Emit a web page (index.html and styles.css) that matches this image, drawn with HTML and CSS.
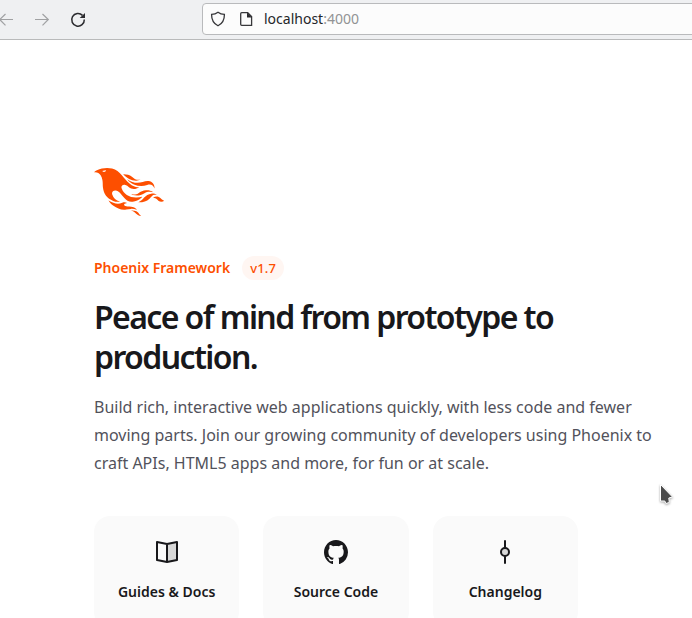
FILE: index.html
```
<!DOCTYPE html>
<html lang="en">
<head>
<meta charset="utf-8">
<title>Phoenix Framework</title>
<link rel="stylesheet" href="styles.css">
</head>
<body>
<header class="toolbar">
  <nav class="nav">
    <svg class="nav-icon muted" viewBox="0 0 16 16"><path d="M15 7.500H1.5M7.500 2 1.700 7.500l5.800 5.800"/></svg>
    <svg class="nav-icon muted" viewBox="0 0 16 16"><path d="M1 7.500h13.500M8.500 2l5.800 5.500-5.800 5.800"/></svg>
    <svg class="nav-icon reload" viewBox="0 0 16 16"><path d="M14.300 7.500A6.300 6.300 0 1 1 12.500 3.400"/><path class="solid" d="M15 1v5h-5.300z"/></svg>
  </nav>
  <div class="address">
    <svg class="address-icon" viewBox="0 0 16 16"><path d="M8 1.2c2 1.500 4 2.100 6.400 2.200.1 5-1.500 8.800-6.400 11.400C3.100 12.200 1.500 8.400 1.600 3.400 4 3.300 6 2.700 8 1.200Z"/></svg>
    <svg class="address-icon" viewBox="0 0 16 16"><path d="M3.700 1.700h6l3.900 3.900v8.700H3.700c-.6 0-1-.4-1-1V2.700c0-.6.4-1 1-1Z"/><path class="solid" d="M9 1.400v5h5z"/></svg>
    <span class="url">localhost<span class="port">:4000</span></span>
  </div>
</header>
<main class="page">
  <svg class="logo" viewBox="0 0 71 48" aria-hidden="true"><path d="m26.371 33.477-.552-.1c-3.92-.729-6.397-3.1-7.57-6.829-.733-2.324.597-4.035 3.035-4.148 1.995-.092 3.362 1.055 4.57 2.39 1.557 1.72 2.984 3.558 4.514 5.305 2.202 2.515 4.797 4.134 8.347 3.634 3.183-.448 5.958-1.725 8.371-3.828.363-.316.761-.592 1.144-.886l-.241-.284c-2.027.63-4.093.841-6.205.735-3.195-.16-6.24-.828-8.964-2.582-2.486-1.601-4.319-3.746-5.19-6.611-.704-2.315.736-3.934 3.135-3.6.948.133 1.746.56 2.463 1.165.583.493 1.143 1.015 1.738 1.493 2.8 2.25 6.712 2.375 10.265-.068-5.842-.026-9.817-3.24-13.308-7.313-1.366-1.594-2.7-3.216-4.095-4.785-2.698-3.036-5.692-5.71-9.79-6.623C12.8-.623 7.745.14 2.893 2.361 1.926 2.804.997 3.319 0 4.149c.494 0 .763.006 1.032 0 2.446-.064 4.28 1.023 5.602 3.024.962 1.457 1.415 3.104 1.761 4.798.513 2.515.247 5.078.544 7.605.761 6.494 4.08 11.026 10.26 13.346 2.267.852 4.591 1.135 7.172.555ZM10.751 3.852c-.976.246-1.756-.148-2.56-.962 1.377-.343 2.592-.476 3.897-.528-.107.848-.607 1.306-1.336 1.49Zm32.002 37.924c-.085-.626-.62-.901-1.04-1.228-1.857-1.446-4.03-1.958-6.333-2-1.375-.026-2.735-.128-4.031-.61-.595-.22-1.26-.505-1.244-1.272.015-.78.693-1 1.31-1.184.505-.15 1.026-.247 1.6-.382-1.46-.936-2.886-1.065-4.787-.3-2.993 1.202-5.943 1.06-8.926-.017-1.684-.608-3.179-1.563-4.735-2.408l-.118.08c1.29 2.115 3.034 3.817 5.004 5.271 3.793 2.8 7.936 4.471 12.784 3.73A66.714 66.714 0 0 1 37 40.877c1.98-.16 3.866.398 5.753.899Zm-9.14-30.345c-.105-.076-.206-.266-.42-.069 1.745 2.36 3.985 4.098 6.683 5.193 4.354 1.767 8.773 2.07 13.293.51 3.51-1.21 6.033-.028 7.343 3.38.19-3.955-2.137-6.837-5.843-7.401-2.084-.318-4.01.373-5.962.94-5.434 1.575-10.485.798-15.094-2.553Zm27.085 15.425c.708.059 1.416.123 2.124.185-1.6-1.405-3.55-1.517-5.523-1.404-3.003.17-5.167 1.903-7.14 3.972-1.739 1.824-3.31 3.87-5.903 4.604.043.078.054.117.066.117.35.005.699.021 1.047.005 3.768-.17 7.317-.965 10.14-3.7.89-.86 1.685-1.817 2.544-2.71.716-.746 1.584-1.159 2.645-1.07Zm-8.753-4.67c-2.812.246-5.254 1.409-7.548 2.943-1.766 1.18-3.654 1.738-5.776 1.37-.374-.066-.75-.114-1.124-.17l-.013.156c.135.07.265.151.405.207.354.14.702.308 1.07.395 4.083.971 7.992.474 11.516-1.803 2.221-1.435 4.521-1.707 7.013-1.336.252.038.503.083.756.107.234.022.479.255.795.003-2.179-1.574-4.526-2.096-7.094-1.872Zm-10.049-9.544c1.475.051 2.943-.142 4.486-1.059-.452.04-.643.04-.827.076-2.126.424-4.033-.04-5.733-1.383-.623-.493-1.257-.974-1.889-1.457-2.503-1.914-5.374-2.555-8.514-2.5.05.154.054.26.108.315 3.417 3.455 7.371 5.836 12.369 6.008Zm24.727 17.731c-2.114-2.097-4.952-2.367-7.578-.537 1.738.078 3.043.632 4.101 1.728a13 13 0 0 0 1.182 1.106c1.6 1.29 4.311 1.352 5.896.155-1.861-.726-1.861-.726-3.601-2.452Zm-21.058 16.06c-1.858-3.46-4.981-4.24-8.59-4.008a9.667 9.667 0 0 1 2.977 1.39c.84.586 1.547 1.311 2.243 2.055 1.38 1.473 3.534 2.376 4.962 2.07-.656-.412-1.238-.848-1.592-1.507Z"/></svg>
  <h1 class="brand">Phoenix Framework <small class="version">v1.7</small></h1>
  <p class="headline">Peace of mind from prototype to production.</p>
  <p class="intro">Build rich, interactive web applications quickly, with less code and fewer moving parts. Join our growing community of developers using Phoenix to craft APIs, HTML5 apps and more, for fun or at scale.</p>
  <div class="cards">
    <a class="card">
      <svg class="card-icon line" viewBox="0 0 24 24"><path class="tint" d="m12 4 10-2v18l-10 2V4Z"/><path d="M12 4 2 2v18l10 2m0-18v18m0-18 10-2v18l-10 2"/></svg>
      <span>Guides &amp; Docs</span>
    </a>
    <a class="card">
      <svg class="card-icon" viewBox="0 0 24 24"><path d="M12 0C5.37 0 0 5.506 0 12.303c0 5.445 3.435 10.043 8.205 11.674.6.107.825-.262.825-.585 0-.292-.015-1.261-.015-2.291C6 21.67 5.22 20.346 4.98 19.654c-.135-.354-.72-1.446-1.23-1.738-.42-.23-1.02-.8-.015-.815.945-.015 1.62.892 1.845 1.261 1.08 1.86 2.805 1.338 3.495 1.015.105-.8.42-1.338.765-1.645-2.67-.308-5.46-1.37-5.46-6.075 0-1.338.465-2.446 1.23-3.307-.12-.308-.54-1.569.12-3.26 0 0 1.005-.323 3.3 1.26.96-.276 1.98-.415 3-.415s2.04.139 3 .416c2.295-1.6 3.3-1.261 3.3-1.261.66 1.691.24 2.952.12 3.26.765.861 1.23 1.953 1.23 3.307 0 4.721-2.805 5.767-5.475 6.075.435.384.81 1.122.81 2.276 0 1.645-.015 2.968-.015 3.383 0 .323.225.707.825.585a12.047 12.047 0 0 0 5.919-4.489A12.537 12.537 0 0 0 24 12.304C24 5.505 18.63 0 12 0Z"/></svg>
      <span>Source Code</span>
    </a>
    <a class="card">
      <svg class="card-icon line" viewBox="0 0 24 24"><path d="M12 1v6M12 17v6"/><circle class="tint outlined" cx="12" cy="12" r="4"/></svg>
      <span>Changelog</span>
    </a>
  </div>
</main>
<svg class="cursor" viewBox="0 0 16 22"><path d="M1.500 1.500v16.500h4.300l1 2.500 3.500-1-.5-4.500 3.700-1z"/></svg>
</body>
</html>
```
FILE: styles.css
```
* {
  box-sizing: border-box;
}

body {
  margin: 0;
  height: 618px;
  overflow: hidden;
  background: #fff;
  color: #18181b;
  font-family: "Noto Sans", sans-serif;
}

h1,
p {
  margin: 0;
}

svg {
  display: block;
  flex: none;
}

.toolbar {
  display: flex;
  height: 40px;
  overflow: hidden;
  background: #eff0f2;
  border-bottom: 1px solid #b9babb;
}

.nav {
  display: flex;
  flex: none;
  align-items: center;
  gap: 20px;
  width: 202px;
  margin-left: -2px;
}

.nav-icon {
  width: 16px;
  height: 16px;
  fill: none;
  stroke: #2b2b2f;
  stroke-width: 1.5;
}

.muted {
  stroke: #a0a1a3;
  stroke-width: 1.2;
}

.solid {
  fill: #2b2b2f;
  stroke: none;
}

.address {
  display: flex;
  align-items: center;
  gap: 12px;
  width: 520px;
  height: 32px;
  margin: 3px 0 0 2px;
  padding-left: 7px;
  flex: none;
  background: #fcfcfc;
  border: 1px solid #b9babc;
  border-radius: 4px;
}

.address-icon {
  width: 16px;
  height: 16px;
  fill: none;
  stroke: #38383b;
  stroke-width: 1.3;
}

.url {
  margin-left: -2px;
  font-size: 14px;
  line-height: 20px;
  color: #242629;
}

.port {
  color: #929394;
}

.page {
  width: 660px;
  padding: 128px 0 0 94px;
}

.logo {
  width: 71px;
  height: 48px;
  fill: #fd4f00;
}

.brand {
  display: flex;
  align-items: center;
  margin-top: 40px;
  color: #fd4f00;
  font-size: 14px;
  font-weight: 600;
  line-height: 24px;
}

.version {
  margin-left: 12px;
  padding: 0 8px;
  border-radius: 12px;
  background: rgb(253 79 0 / 5%);
  font-size: 13px;
  font-weight: 500;
  letter-spacing: 0.15px;
}

.headline {
  margin-top: 17px;
  font-size: 32px;
  font-weight: 600;
  line-height: 40px;
  letter-spacing: -0.05em;
}

.intro {
  margin-top: 16px;
  color: #52525b;
  font-size: 16px;
  line-height: 28px;
}

.cards {
  display: grid;
  grid-template-columns: repeat(3, 1fr);
  gap: 24px;
  width: 484px;
  margin-top: 39px;
}

.card {
  display: flex;
  flex-direction: column;
  align-items: center;
  gap: 16px;
  padding: 24px 0;
  border-radius: 16px;
  background: #fafafa;
  font-size: 14px;
  font-weight: 600;
  line-height: 24px;
}

.card-icon {
  width: 24px;
  height: 24px;
  fill: #18181b;
}

.line {
  fill: none;
  stroke: #18181b;
  stroke-width: 2;
  stroke-linecap: round;
  stroke-linejoin: round;
}

.tint {
  fill: #18181b;
  fill-opacity: 0.15;
  stroke: none;
}

.outlined {
  stroke: #18181b;
}

.cursor {
  position: absolute;
  left: 659px;
  top: 483px;
  width: 16px;
  height: 22px;
  fill: #4b4b4b;
  stroke: #fff;
  filter: drop-shadow(0 1px 1px rgb(0 0 0 / 35%));
}
```
